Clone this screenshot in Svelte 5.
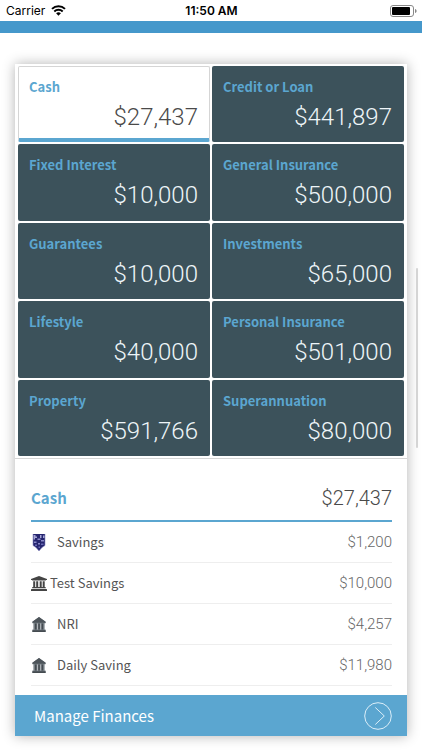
<!--
  Finance Summary
  ---------------------
  - Category tiles with a total each; tapping one selects it.
  - Below the tiles, the accounts of the selected category.
-->
<script>
    const categories = [
        { name: "Cash", total: "$27,437" },
        { name: "Credit or Loan", total: "$441,897" },
        { name: "Fixed Interest", total: "$10,000" },
        { name: "General Insurance", total: "$500,000" },
        { name: "Guarantees", total: "$10,000" },
        { name: "Investments", total: "$65,000" },
        { name: "Lifestyle", total: "$40,000" },
        { name: "Personal Insurance", total: "$501,000" },
        { name: "Property", total: "$591,766" },
        { name: "Superannuation", total: "$80,000" },
    ];

    const accounts = {
        Cash: [
            { name: "Savings", amount: "$1,200", icon: "crest" },
            { name: "Test Savings", amount: "$10,000", icon: "bank" },
            { name: "NRI", amount: "$4,257", icon: "house" },
            { name: "Daily Saving", amount: "$11,980", icon: "house" },
        ],
    };

    let selectedName = $state("Cash");
    let selected = $derived(categories.find((c) => c.name === selectedName));
    let rows = $derived(accounts[selectedName] ?? []);
</script>

<div class="status-bar">
    <div class="carrier">
        <span>Carrier</span>
        <svg width="15" height="11" viewBox="0 0 15 11" aria-hidden="true">
            <path d="M1 3.9a9.4 9.4 0 0 1 13 0" fill="none" stroke="#000" stroke-width="2" />
            <path d="M3.3 6.5a6 6 0 0 1 8.4 0" fill="none" stroke="#000" stroke-width="1.9" />
            <path d="M7.5 10.8 5.1 8.3a3.5 3.5 0 0 1 4.8 0z" fill="#000" />
        </svg>
    </div>
    <div class="time">11:50 AM</div>
    <div class="battery">
        <svg width="27" height="12" viewBox="0 0 27 12" aria-hidden="true">
            <rect x="0.5" y="0.5" width="23" height="11" rx="2.5" fill="none" stroke="#888" />
            <rect x="2" y="2" width="18" height="8" rx="1" fill="#000" />
            <path d="M25 4v4c1-.3 1.6-1 1.6-2S26 4.3 25 4z" fill="#888" />
        </svg>
    </div>
</div>
<div class="top-strip"></div>

<main class="card">
    <div class="tiles">
        {#each categories as category}
            <button
                class="tile"
                class:active={category.name === selectedName}
                onclick={() => (selectedName = category.name)}
            >
                <span class="tile-name">{category.name}</span>
                <span class="tile-total">{category.total}</span>
            </button>
        {/each}
    </div>

    <section class="details">
        <header class="details-header">
            <h2>{selected.name}</h2>
            <span class="details-total">{selected.total}</span>
        </header>
        <ul>
            {#each rows as row}
                <li class="row">
                    <span class="icon {row.icon}">
                        {#if row.icon === "crest"}
                            <svg width="14" height="17" viewBox="0 0 14 17" aria-hidden="true">
                                <path d="M1 0h12v11.5l-3 2L7 17l-3-3.5-3-2z" fill="#25256f" />
                                <path d="M1.5 1h2v1.5h1.5V4h-2v1.5H1.5zM8 1h1.5v3H8zM11 1.5h1.5V4H11z" fill="#a5a5d6" />
                                <path d="M5.5 4.5h3V6h-3zM2 7.5h2.5V9H2zM9 6h3v1.5H9zM6 9h2v1.5H6z" fill="#8b8bca" />
                                <path d="M3 10.5h2V12H3zM9 9.5h2.5V11H9zM6.5 12.5h1.5V14H6.5z" fill="#6a6ab5" />
                                <path d="M1 0v11.5l3 2L7 17l3-3.5 3-2V0" fill="none" stroke="#8d8dc4" stroke-width=".6" />
                            </svg>
                        {:else if row.icon === "bank"}
                            <svg width="16" height="15" viewBox="0 0 16 15" aria-hidden="true">
                                <path
                                    d="M8 0l8 3v1h-1c0 .3-.3.6-.6.6H1.6c-.3 0-.6-.3-.6-.6H0V3zM2.2 5.3h2V11h1V5.3h2V11h1.5V5.3h2V11h1V5.3h2V11h.5c.4 0 .6.3.6.6v.6H1.1v-.6c0-.3.3-.6.6-.6h.5zM.6 12.9h14.8c.3 0 .6.3.6.6V15H0v-1.5c0-.3.3-.6.6-.6z"
                                    fill="#444"
                                />
                            </svg>
                        {:else}
                            <svg width="14" height="15" viewBox="0 0 14 15" aria-hidden="true">
                                <path d="M7 0l6.6 4.8v1.4h-1v6.3h1V15H.4v-2.5h1V6.2h-1V4.8z" fill="#777f85" />
                                <path d="M7 0l6.6 4.8v1H.4v-1z" fill="#4d545a" />
                                <path d="M3 6.5h1.5v6H3zM6.3 6.5h1.5v6H6.3zM9.6 6.5h1.5v6H9.6zM.4 13.2h13.2V15H.4z" fill="#444b50" />
                                <path d="M5 6.5h.8v6H5zM8.3 6.5h.8v6h-.8z" fill="#c0c4c7" />
                            </svg>
                        {/if}
                    </span>
                    <span class="row-name">{row.name}</span>
                    <span class="row-amount">{row.amount}</span>
                </li>
            {/each}
        </ul>
    </section>

    <button class="manage">
        <span>Manage Finances</span>
        <svg width="28" height="28" viewBox="0 0 28 28" aria-hidden="true">
            <circle cx="14" cy="14" r="13.3" fill="none" stroke="#dceef8" />
            <path d="M11.3 5.5l9 8.5-9 8.5" fill="none" stroke="#dceef8" />
        </svg>
    </button>
</main>
<div class="scroll-thumb"></div>

<style>
    :global(body) {
        margin: 0;
        background: #fff;
        color: #4a4a4a;
        font-family: "Noto Sans CJK SC", "Noto Sans", sans-serif;
    }

    button {
        border: 0;
        margin: 0;
        font-family: inherit;
        text-align: left;
        cursor: pointer;
    }

    .status-bar {
        display: grid;
        grid-template-columns: 1fr auto 1fr;
        align-items: center;
        height: 21px;
        padding: 0 5px 0 6px;
        color: #000;
        font-family: Inter, sans-serif;
        font-size: 12px;
        line-height: 20px;
    }

    .carrier {
        display: flex;
        align-items: center;
        gap: 6px;
    }

    .time {
        font-weight: 600;
    }

    .battery {
        display: flex;
        justify-content: flex-end;
    }

    .top-strip {
        height: 12px;
        background: #4598cb;
    }

    .card {
        margin: 31px 15px 14px;
        background: #fff;
        box-shadow: 0 0 12px rgba(0, 0, 0, 0.3);
    }

    .tiles {
        display: grid;
        grid-template-columns: 1fr 1fr;
        grid-auto-rows: 1fr;
        gap: 2px;
        min-height: 390px;
        padding: 2px 3px;
        border-bottom: 1px solid #d5d5d5;
    }

    .tile {
        display: flex;
        flex-direction: column;
        padding: 11px 12px 0 11px;
        border-radius: 2px;
        background: #3c525b;
        color: #eef5f8;
    }

    .tile-name {
        color: #5ba6d0;
        font-size: 13px;
        font-weight: 700;
        line-height: 20px;
    }

    .tile-total {
        align-self: flex-end;
        font-family: Roboto, sans-serif;
        font-size: 24px;
        font-weight: 300;
        line-height: 40px;
    }

    .tile.active {
        padding: 10px 11px 0 10px;
        border: 1px solid #d5d5d5;
        border-bottom: 4px solid #5ba6d0;
        background: #fff;
        color: #4a4a4a;
    }

    .details {
        padding: 17px 15px 9px 16px;
    }

    .details-header {
        display: flex;
        align-items: center;
        justify-content: space-between;
        height: 44px;
        border-bottom: 2px solid #5ba6d0;
    }

    h2 {
        margin: 0;
        color: #5ba6d0;
        font-size: 15px;
        font-weight: 700;
        line-height: 24px;
    }

    .details-total {
        font-family: Roboto, sans-serif;
        font-size: 20px;
        font-weight: 300;
        line-height: 24px;
    }

    ul {
        margin: 0;
        padding: 0;
        list-style: none;
    }

    .row {
        display: flex;
        align-items: center;
        height: 40px;
        border-bottom: 1px solid #eee;
        line-height: 20px;
    }

    .icon {
        display: flex;
        width: 26px;
        padding-left: 1px;
        box-sizing: border-box;
    }

    .icon.bank {
        width: 19px;
        padding-left: 0;
    }

    .row-name {
        flex: 1;
        color: #555;
        font-size: 13px;
    }

    .row-amount {
        color: #666;
        font-family: Roboto, sans-serif;
        font-size: 15px;
        font-weight: 300;
    }

    .manage {
        display: flex;
        align-items: center;
        justify-content: space-between;
        width: 100%;
        height: 41px;
        padding: 0 15px 0 19px;
        background: #5ba6d0;
        color: #fff;
        font-size: 15px;
        line-height: 24px;
    }

    .scroll-thumb {
        position: absolute;
        top: 268px;
        right: 4px;
        width: 2px;
        height: 180px;
        border-radius: 1px;
        background: #d5d5d5;
    }
</style>
